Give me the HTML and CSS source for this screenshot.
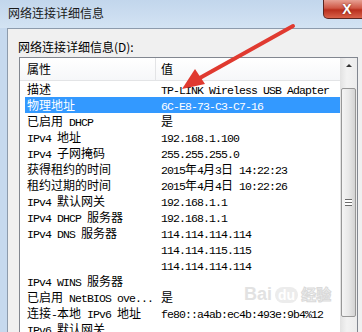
FILE: index.html
```html
<!DOCTYPE html>
<html lang="zh-CN">
<head>
    <meta charset="UTF-8">
    <title>网络连接详细信息</title>
    <link rel="stylesheet" href="styles.css">
</head>
<body>

    <div class="window">
        <div class="titlebar">
            <span class="title">网络连接详细信息</span>
            <span class="close">X</span>
        </div>

        <div class="frame">
            <div class="client">
                <div class="label">网络连接详细信息(D):</div>

                <div class="listbox">
                    <div class="table">
                        <div class="head">
                            <span class="hk">属性</span>
                            <span class="hv">值</span>
                        </div>
                        <div class="rows">
                            <div class="row"><span class="k">描述</span><span class="v"><span class="m">TP-LINK Wireless USB Adapter</span></span></div>
                            <div class="row selected"><span class="k">物理地址</span><span class="v"><span class="m">6C-E8-73-C3-C7-16</span></span></div>
                            <div class="row"><span class="k">已启用<span class="m"> DHCP</span></span><span class="v">是</span></div>
                            <div class="row"><span class="k"><span class="m">IPv4 </span>地址</span><span class="v"><span class="m">192.168.1.100</span></span></div>
                            <div class="row"><span class="k"><span class="m">IPv4 </span>子网掩码</span><span class="v"><span class="m">255.255.255.0</span></span></div>
                            <div class="row"><span class="k">获得租约的时间</span><span class="v"><span class="m">2015</span>年<span class="m">4</span>月<span class="m">3</span>日<span class="m"> 14:22:23</span></span></div>
                            <div class="row"><span class="k">租约过期的时间</span><span class="v"><span class="m">2015</span>年<span class="m">4</span>月<span class="m">4</span>日<span class="m"> 10:22:26</span></span></div>
                            <div class="row"><span class="k"><span class="m">IPv4 </span>默认网关</span><span class="v"><span class="m">192.168.1.1</span></span></div>
                            <div class="row"><span class="k"><span class="m">IPv4 DHCP </span>服务器</span><span class="v"><span class="m">192.168.1.1</span></span></div>
                            <div class="row"><span class="k"><span class="m">IPv4 DNS </span>服务器</span><span class="v"><span class="m">114.114.114.114</span></span></div>
                            <div class="row"><span class="k"></span><span class="v"><span class="m">114.114.115.115</span></span></div>
                            <div class="row"><span class="k"></span><span class="v"><span class="m">114.114.114.114</span></span></div>
                            <div class="row"><span class="k"><span class="m">IPv4 WINS </span>服务器</span><span class="v"></span></div>
                            <div class="row"><span class="k">已启用<span class="m"> NetBIOS ove...</span></span><span class="v">是</span></div>
                            <div class="row"><span class="k">连接<span class="m">-</span>本地<span class="m"> IPv6 </span>地址</span><span class="v"><span class="m">fe80::a4ab:ec4b:493e:9b4%12</span></span></div>
                            <div class="row"><span class="k"><span class="m">IPv6 </span>默认网关</span><span class="v"></span></div>
                        </div>
                    </div>

                    <div class="scroll">
                        <div class="up"></div>
                        <div class="thumb"><span class="grip"></span></div>
                    </div>
                </div>
            </div>
        </div>
    </div>

    <!-- annotation arrow drawn over the screenshot -->
    <svg class="arrow" width="362" height="332" viewBox="0 0 362 332">
        <line x1="293" y1="26" x2="198" y2="79" stroke="#e03a30" stroke-width="4" stroke-linecap="round"/>
        <polygon points="182,89 195,69 205,84" fill="#e03a30"/>
    </svg>

    <div class="watermark">
        <span class="wm-bai">Bai</span><span class="wm-du">du</span><span class="wm-jy">经验</span>
    </div>

</body>
</html>
```

FILE: styles.css
```css
* {
    box-sizing: border-box;
}

body {
    margin: 0;
    width: 362px;
    height: 332px;
    overflow: hidden;
    position: relative;
    background-color: #c6d9ee;
    font-family: "Noto Sans CJK SC", sans-serif;
    font-size: 12px;
    color: #000;
}

.window {
    display: flex;
    flex-direction: column;
    height: 332px;
}

.titlebar {
    height: 28px;
    display: flex;
    align-items: flex-start;
    background: linear-gradient(#c2d6ec, #d3e3f3);
}

.title {
    padding: 5px 0 0 8px;
    line-height: 16px;
    color: #1a1a1a;
}

.close {
    margin-left: auto;
    margin-right: -9px;
    width: 48px;
    height: 19px;
    border: 1px solid #5a2621;
    border-top: none;
    border-radius: 0 0 5px 5px;
    background: linear-gradient(#e7a093, #cf5745 45%, #b92f1d 55%, #d9624a);
    color: #fff;
    font-family: "Liberation Sans", sans-serif;
    font-weight: bold;
    font-size: 14px;
    line-height: 18px;
    text-align: center;
    text-shadow: 0 0 2px #6b1d12;
}

.frame {
    flex: 1;
    display: flex;
    padding-left: 7px;
    overflow: hidden;
}

.client {
    flex: 1;
    background-color: #f0f0f0;
    border-left: 1px solid #8d9bac;
    border-top: 1px solid #8d9bac;
    padding: 10px 0 0 11px;
}

.label {
    line-height: 16px;
    margin: 0 0 2px -1px;
}

.listbox {
    width: 339px;
    height: 275px;
    border: 1px solid #828790;
    border-bottom: none;
    background-color: #fff;
    display: flex;
    overflow: hidden;
}

.table {
    flex: 1;
}

.head {
    height: 23px;
    display: flex;
    line-height: 22px;
    border-bottom: 1px solid #e3e4e6;
    background: linear-gradient(#fff, #f6f7f9);
}

.hk {
    width: 136px;
    padding-left: 7px;
    border-right: 1px solid #e3e4e6;
}

.hv {
    padding-left: 5px;
}

.rows {
    padding-left: 5px;
}

.row {
    display: flex;
    height: 16px;
    line-height: 16px;
    white-space: nowrap;
}

.row.selected {
    background-color: #3399ff;
    color: #fff;
}

.k {
    width: 136px;
    flex: none;
    padding-left: 2px;
}

.m {
    font-family: "Liberation Mono", monospace;
    font-size: 11.5px;
    letter-spacing: -0.9px;
    white-space: pre;
}

.scroll {
    width: 17px;
    display: flex;
    flex-direction: column;
    align-items: center;
    background: linear-gradient(90deg, #e2e2e2, #f2f2f2 40%, #ececec);
}

.up {
    height: 30px;
    width: 17px;
    flex: none;
    position: relative;
}

.up::after {
    content: "";
    position: absolute;
    left: 6px;
    top: 6px;
    border-left: 3px solid transparent;
    border-right: 3px solid transparent;
    border-bottom: 3px solid #333;
}

.thumb {
    width: 15px;
    height: 229px;
    flex: none;
    border: 1px solid #979797;
    border-radius: 2px;
    background: linear-gradient(90deg, #f4f4f4, #e8e8e8 50%, #d3d3d3);
    display: flex;
    align-items: center;
    justify-content: center;
}

.grip {
    width: 7px;
    height: 7px;
    border-top: 1px solid #6b6b6b;
    border-bottom: 1px solid #6b6b6b;
    background: linear-gradient(#fff 2px, #6b6b6b 2px, #6b6b6b 3px, #fff 3px);
}

.arrow {
    position: absolute;
    left: 0;
    top: 0;
    pointer-events: none;
}

.watermark {
    position: absolute;
    left: 244px;
    top: 285px;
    line-height: 18px;
    color: #e2e2e2;
    font-family: "Liberation Sans", sans-serif;
    font-weight: bold;
    font-size: 18px;
    pointer-events: none;
}

.wm-du {
    margin: 0 3px;
    padding: 0 3px;
    border-radius: 8px;
    background-color: #ececec;
    color: #fff;
    font-size: 14px;
}

.wm-jy {
    font-family: "Noto Sans CJK SC", sans-serif;
    font-size: 15px;
    color: #f4f4f4;
    -webkit-text-stroke: 1px #dadada;
}
```
